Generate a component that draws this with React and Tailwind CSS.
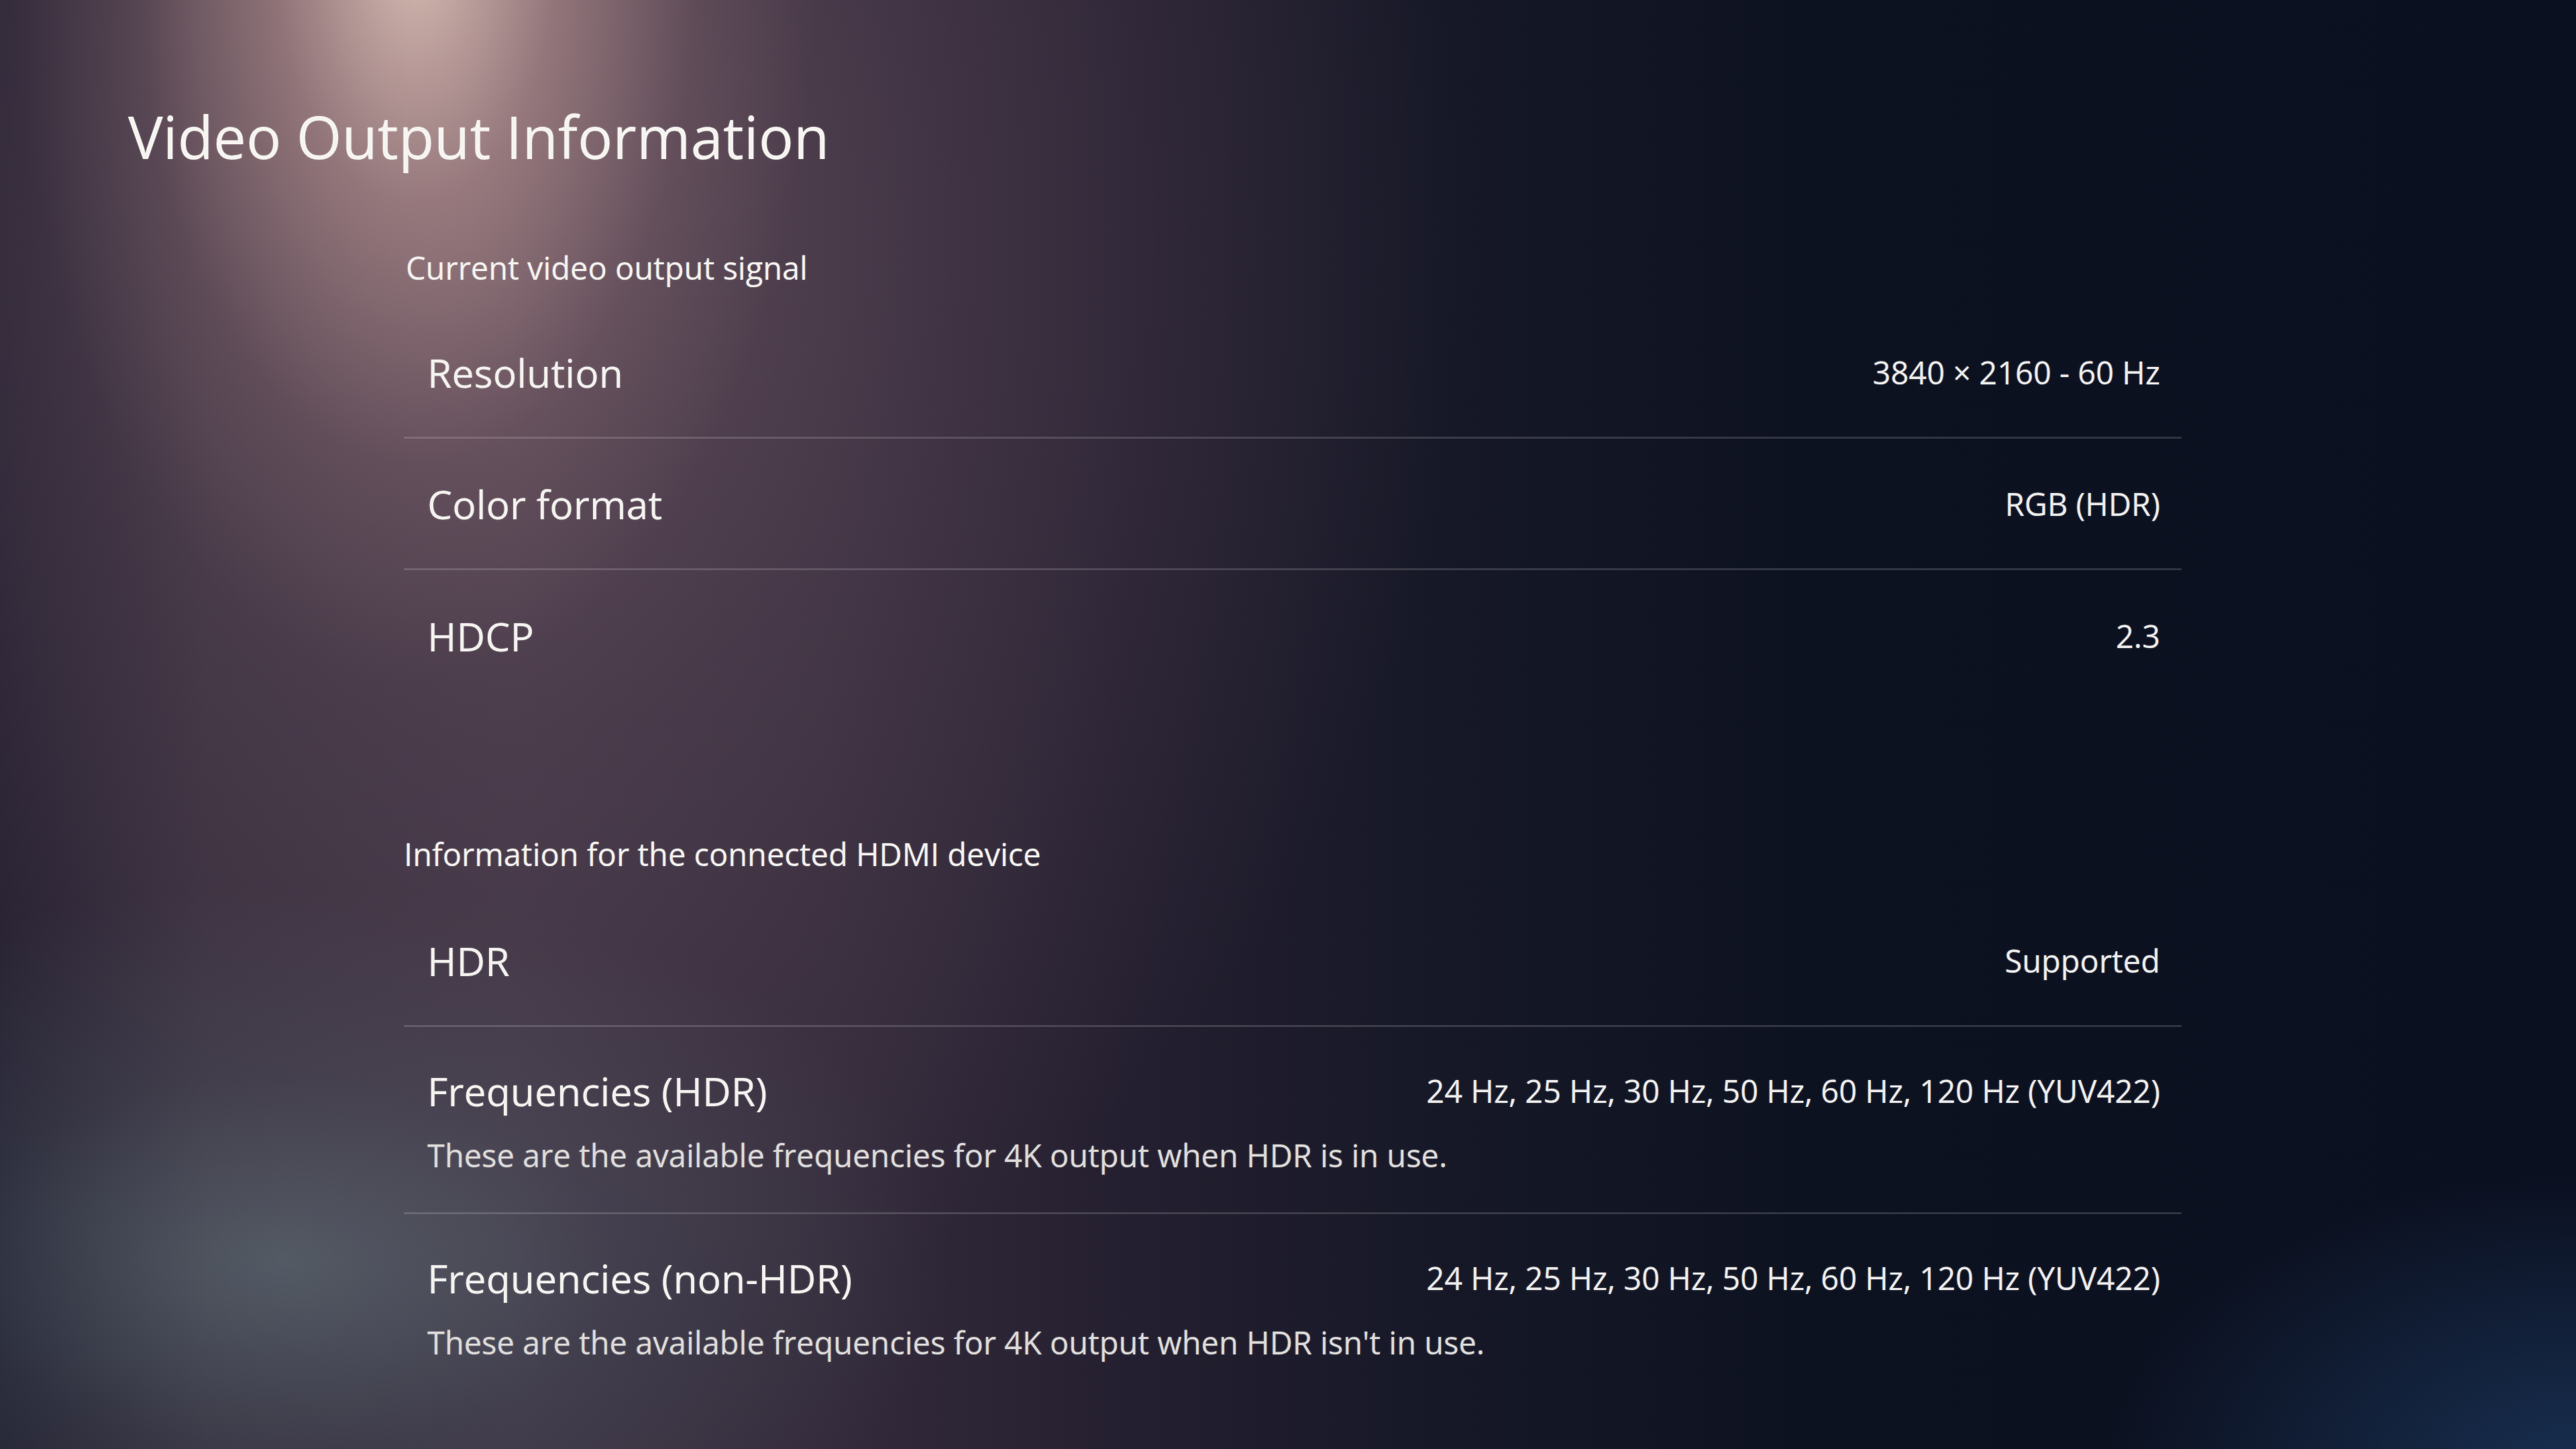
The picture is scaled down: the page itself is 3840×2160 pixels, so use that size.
import React from "react";

function Row({ label, value, last }) {
  return (
    <div
      className={
        "flex items-center justify-between h-[196px] pl-[35px] pr-[32px] " +
        (last ? "" : "border-b-[3px] border-white/15")
      }
    >
      <span className="text-[59px] leading-[70px] font-medium text-[#f3f1ee]">{label}</span>
      <span className="text-[47px] leading-[60px] font-medium text-[#ecebea]">{value}</span>
    </div>
  );
}

function FreqRow({ label, value, desc, last }) {
  return (
    <div
      className={
        "flex flex-col h-[279px] pt-[60px] pl-[35px] pr-[32px] " +
        (last ? "" : "border-b-[3px] border-white/15")
      }
    >
      <div className="flex items-center justify-between">
        <span className="text-[59px] leading-[70px] font-medium text-[#f3f1ee]">{label}</span>
        <span className="text-[47px] leading-[60px] font-medium text-[#ecebea]">{value}</span>
      </div>
      <p className="mt-[31px] text-[47px] leading-[60px] font-medium text-[#dcdad8]">{desc}</p>
    </div>
  );
}

export default function App() {
  return (
    <div className="w-[3840px] h-[2160px] overflow-hidden font-['Open_Sans',sans-serif] [text-shadow:0_0_3px_rgba(255,255,255,0.35)] bg-[#0b1020] bg-[radial-gradient(ellipse_600px_1100px_at_620px_-80px,rgba(238,208,195,0.85)_0%,rgba(205,165,160,0.5)_35%,rgba(160,125,130,0.18)_70%,rgba(120,90,110,0)_100%),radial-gradient(ellipse_1500px_1700px_at_700px_350px,rgba(135,105,115,0.5)_0%,rgba(110,85,100,0.3)_45%,rgba(80,60,80,0)_100%),radial-gradient(ellipse_1000px_560px_at_420px_1880px,rgba(110,135,140,0.5)_0%,rgba(90,110,120,0.22)_50%,rgba(60,70,90,0)_100%),radial-gradient(ellipse_700px_450px_at_3840px_2200px,rgba(40,85,140,0.45)_0%,rgba(20,40,80,0)_100%),linear-gradient(to_right,#1f1c2d_0%,#342c3b_8%,#3c3242_20%,#342b3b_32%,#241f30_44%,#161827_56%,#0d1221_70%,#0b1020_100%)]">
      <div className="pt-[150px] pl-[191px]">
        <h1 className="text-[87px] leading-[106px] text-[#f6f4f0] font-normal">
          Video Output Information
        </h1>
      </div>
      <div className="ml-[602px] w-[2650px] mt-[113px]">
        <h2 className="pl-[3px] text-[47px] leading-[60px] font-medium text-[#f3f1ee]">
          Current video output signal
        </h2>
        <div className="mt-[29px]">
          <Row label="Resolution" value="3840 × 2160 - 60 Hz" />
          <Row label="Color format" value="RGB (HDR)" />
          <Row label="HDCP" value="2.3" last />
        </div>
        <h2 className="mt-[197px] text-[47px] leading-[60px] font-medium text-[#f3f1ee]">
          Information for the connected HDMI device
        </h2>
        <div className="mt-[32px]">
          <Row label="HDR" value="Supported" />
          <FreqRow
            label="Frequencies (HDR)"
            value="24 Hz, 25 Hz, 30 Hz, 50 Hz, 60 Hz, 120 Hz (YUV422)"
            desc="These are the available frequencies for 4K output when HDR is in use."
          />
          <FreqRow
            label="Frequencies (non-HDR)"
            value="24 Hz, 25 Hz, 30 Hz, 50 Hz, 60 Hz, 120 Hz (YUV422)"
            desc="These are the available frequencies for 4K output when HDR isn't in use."
            last
          />
        </div>
      </div>
    </div>
  );
}
